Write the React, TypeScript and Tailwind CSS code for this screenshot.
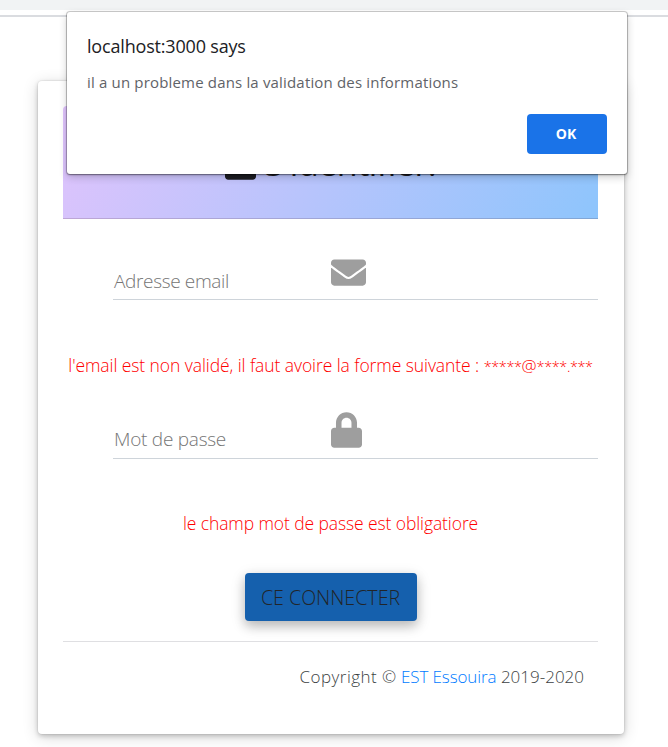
import { FaEnvelope, FaLock } from "react-icons/fa";

function Alert() {
  return (
    <div
      role="alertdialog"
      className="absolute left-[67px] top-[12px] flex h-[162px] w-[560px] flex-col rounded-[3px] bg-white px-5 pt-[22px] shadow-[0_0_0_1px_rgba(0,0,0,0.18),0_1px_2px_0_rgba(0,0,0,0.35),0_3px_8px_rgba(0,0,0,0.2)]"
    >
      <h2 className="text-[18px] leading-[24px] tracking-[-0.18px] text-[#202124]">localhost:3000 says</h2>
      <p className="mt-[14px] text-[15px] leading-[20px] tracking-[0.17px] text-[#5f6368]">
        il a un probleme dans la validation des informations
      </p>
      <button className="mt-[22px] h-10 w-20 self-end rounded-[4px] bg-[#1a73e8] pb-[2px] pr-[2px] text-[14px] font-bold text-white">
        OK
      </button>
    </div>
  );
}

export default function App() {
  return (
    <div className="relative h-[747px] w-[668px] overflow-hidden bg-white font-['Open_Sans','Noto_Sans',sans-serif]">
      <div className="h-[10px] bg-[#f1f3f4]" />
      <div className="mt-[5px] h-[2px] bg-[#dadce0]" />
      <main className="ml-[38px] mt-[64px] flex h-[653px] w-[586px] flex-col rounded-[4px] bg-white pl-[25px] pr-[26px] pt-[25px] font-[350] shadow-[0_0_0_1px_rgba(0,0,0,0.04),0_2px_5px_0_rgba(0,0,0,0.2),0_3px_16px_0_rgba(0,0,0,0.16)]">
        <header className="flex h-[113px] shrink-0 items-end justify-center rounded-t-[4px] border-b border-black/15 bg-[linear-gradient(120deg,#e0c3fc_0%,#8ec5fc_100%)] pb-[38px] text-[#1c1c22]">
          <FaLock className="mr-[9px] h-[36px] w-[31px]" />
          <h1 className="mb-[-6px] whitespace-nowrap text-[34px] font-normal leading-[46px] tracking-[-0.5px]">S'identifier:</h1>
        </header>
        <div className="ml-[50px] mt-[36px] flex h-[45px] border-b border-[#ced4da]">
          <label className="w-[218px] pl-px pt-[12px] text-[19px] leading-[28px] tracking-[-0.35px] text-[#757575]">
            Adresse email
          </label>
          <FaEnvelope className="h-[35px] w-[35px] text-[#9e9e9e]" />
        </div>
        <p className="mt-[52px] h-[26px] whitespace-nowrap text-center text-[17.5px] leading-[26px] tracking-[-0.08px] text-[#ff0000]">
          l'email est non validé, il faut avoire la forme suivante :{" "}
          <span className="text-[14.5px] leading-none tracking-[-0.4px]">*****</span>
          <span className="text-[17px] leading-none">@</span>
          <span className="text-[14.5px] leading-none tracking-[-0.4px]">****.***</span>
        </p>
        <div className="ml-[50px] mt-[34px] flex h-[47px] border-b border-[#ced4da]">
          <label className="w-[218px] pl-px pt-[13px] text-[19px] leading-[28px] tracking-[-0.25px] text-[#757575]">
            Mot de passe
          </label>
          <FaLock className="h-[36px] w-[31px] text-[#9e9e9e]" />
        </div>
        <p className="mt-[51px] h-[26px] whitespace-nowrap text-center text-[17.5px] leading-[26px] tracking-[-0.1px] text-[#ff0000]">
          le champ mot de passe est obligatiore
        </p>
        <button className="mt-[37px] h-[48px] w-[172px] shrink-0 self-center whitespace-nowrap rounded-[4px] bg-[#1560ad] pt-px text-[19.6px] text-[#212529] shadow-[0_5px_11px_0_rgba(0,0,0,0.18),0_4px_15px_0_rgba(0,0,0,0.15)]">
          CE CONNECTER
        </button>
        <hr className="mt-5 border-[#dfdfe2]" />
        <p className="mr-[14px] mt-[22px] whitespace-nowrap text-right text-[17px] leading-[26px] text-[#3c3f43]">
          <span className="tracking-[0.45px]">Copyright ©</span> <a className="tracking-[-0.1px] text-[#007bff]">EST Essouira</a>{" "}
          <span className="tracking-[0px]">2019-2020</span>
        </p>
      </main>
      <Alert />
    </div>
  );
}
